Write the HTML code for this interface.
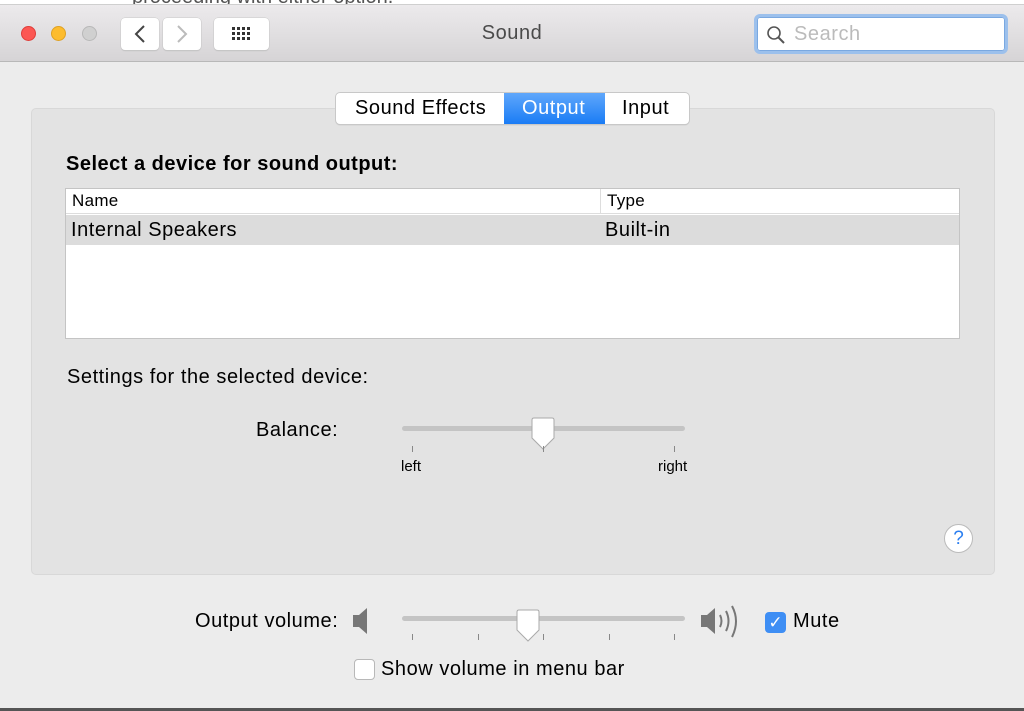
<!DOCTYPE html>
<html><head><style>
*{margin:0;padding:0;box-sizing:border-box}
body{width:1024px;height:711px;overflow:hidden;background:#fff;font-family:"Liberation Sans",sans-serif;position:relative;color:#000}
.abs{position:absolute}
#win{left:0;top:4px;width:1024px;height:705px;background:#ececec;border-top:1px solid #cfcfcf}
#title{left:0;top:0;width:1024px;height:57px;background:linear-gradient(#eceaec,#d6d4d6);border-bottom:1px solid #b8b8b8}
.dot{width:15px;height:15px;border-radius:50%;top:21px}
.btn{background:#fff;border-radius:4px;box-shadow:0 0 0 .5px #c8c8c8,0 1px 1px #bbb;height:32px;top:13px}
.lbl{font-size:20px;letter-spacing:.55px;white-space:nowrap}
</style></head><body>
<div class="abs" style="left:132px;top:-14px;font-size:20px;color:#555">proceeding with either option.</div>
<div id="win" class="abs">
 <div id="title" class="abs">
  <div class="abs dot" style="left:21px;background:#fc5753;border:1px solid #df3d39"></div>
  <div class="abs dot" style="left:51px;background:#fdbc2e;border:1px solid #dfa123"></div>
  <div class="abs dot" style="left:82px;background:#d0d0d0;border:1px solid #b8b8b8"></div>
  <div class="abs btn" style="left:121px;width:38px"><svg width="38" height="32"><path d="M23 8 L15 16 L23 24" fill="none" stroke="#444" stroke-width="2"/></svg></div>
  <div class="abs btn" style="left:163px;width:38px"><svg width="38" height="32"><path d="M15 8 L23 16 L15 24" fill="none" stroke="#bbb" stroke-width="2"/></svg></div>
  <div class="abs btn" style="left:214px;width:55px"><svg width="55" height="32"><g fill="#333"><rect x="18" y="9" width="3" height="3"/><rect x="23" y="9" width="3" height="3"/><rect x="28" y="9" width="3" height="3"/><rect x="33" y="9" width="3" height="3"/><rect x="18" y="14" width="3" height="3"/><rect x="23" y="14" width="3" height="3"/><rect x="28" y="14" width="3" height="3"/><rect x="33" y="14" width="3" height="3"/><rect x="18" y="19" width="3" height="3"/><rect x="23" y="19" width="3" height="3"/><rect x="28" y="19" width="3" height="3"/><rect x="33" y="19" width="3" height="3"/></g></svg></div>
  <div class="abs lbl" style="left:0;width:1024px;text-align:center;top:17px;color:#4a4a4a">Sound</div>
  <div class="abs" style="left:754px;top:9px;width:254px;height:40px;border-radius:6px;background:#fff;border:3px solid #9cc0ec;box-shadow:inset 0 0 0 1px #7aa8e0"></div>
  <svg class="abs" style="left:766px;top:20px" width="22" height="22"><circle cx="8" cy="8" r="6" fill="none" stroke="#555" stroke-width="1.6"/><path d="M12.5 12.5 L18 18" stroke="#555" stroke-width="2"/></svg>
  <div class="abs lbl" style="left:794px;top:18px;color:#bbb">Search</div>
 </div>
 <div class="abs" style="left:31px;top:103px;width:964px;height:467px;background:#e3e3e3;border:1px solid #d8d8d8;border-radius:5px"></div>
 <div class="abs" style="left:336px;top:88px;width:353px;height:31px;background:#fff;border-radius:4px;box-shadow:0 0 0 1px #c8c8c8,0 1px 1px #aaa;overflow:hidden">
  <div class="abs" style="left:168px;top:0;width:101px;height:31px;background:linear-gradient(#5fa7fb,#1a7cf5)"></div>
  <div class="abs lbl" style="left:19px;top:4px">Sound Effects</div>
  <div class="abs lbl" style="left:186px;top:4px;color:#fff">Output</div>
  <div class="abs lbl" style="left:286px;top:4px">Input</div>
 </div>
 <div class="abs lbl" style="left:66px;top:148px;font-weight:bold;letter-spacing:.5px">Select a device for sound output:</div>
 <div class="abs" style="left:65px;top:183px;width:895px;height:151px;background:#fff;border:1px solid #c4c4c4">
  <div class="abs" style="left:0;top:0;width:893px;height:25px;border-bottom:1px solid #ddd;font-size:17px;letter-spacing:.3px"><span class="abs" style="left:6px;top:2px">Name</span><span class="abs" style="left:534px;top:0;height:24px;border-left:1px solid #ddd"></span><span class="abs" style="left:541px;top:2px">Type</span></div>
  <div class="abs lbl" style="left:0;top:26px;width:893px;height:30px;background:#dcdcdc"><span class="abs" style="left:5px;top:4px">Internal Speakers</span><span class="abs" style="left:539px;top:4px">Built-in</span></div>
 </div>
 <div class="abs lbl" style="left:67px;top:361px">Settings for the selected device:</div>
 <div class="abs lbl" style="left:256px;top:414px">Balance:</div>
 <div class="abs" style="left:402px;top:421px;width:283px;height:5px;border-radius:3px;background:#c4c4c4"></div>
 <svg class="abs" style="left:529px;top:412px" width="28" height="34"><path d="M3 3 Q3 1 5 1 H23 Q25 1 25 3 V21 L14 32 L3 21 Z" fill="#fff" stroke="#aaa"/></svg>
 <div class="abs" style="left:412px;top:441px;width:1px;height:6px;background:#888"></div>
 <div class="abs" style="left:543px;top:441px;width:1px;height:6px;background:#888"></div>
 <div class="abs" style="left:674px;top:441px;width:1px;height:6px;background:#888"></div>
 <div class="abs" style="left:401px;top:453px;font-size:15px">left</div>
 <div class="abs" style="left:658px;top:453px;font-size:15px">right</div>
 <div class="abs" style="left:944px;top:519px;width:29px;height:29px;border-radius:50%;background:#fff;border:1px solid #bbb;color:#2a7ef0;text-align:center;font-size:19px;line-height:27px">?</div>
 <div class="abs lbl" style="left:195px;top:605px">Output volume:</div>
 <svg class="abs" style="left:352px;top:601px" width="22" height="30"><path d="M1 9 H7 L15 2 V28 L7 21 H1 Z" fill="#777"/></svg>
 <div class="abs" style="left:402px;top:611px;width:283px;height:5px;border-radius:3px;background:#c4c4c4"></div>
 <svg class="abs" style="left:514px;top:604px" width="28" height="34"><path d="M3 3 Q3 1 5 1 H23 Q25 1 25 3 V21 L14 32 L3 21 Z" fill="#fff" stroke="#aaa"/></svg>
 <div class="abs" style="left:412px;top:629px;width:1px;height:6px;background:#888"></div>
 <div class="abs" style="left:478px;top:629px;width:1px;height:6px;background:#888"></div>
 <div class="abs" style="left:543px;top:629px;width:1px;height:6px;background:#888"></div>
 <div class="abs" style="left:609px;top:629px;width:1px;height:6px;background:#888"></div>
 <div class="abs" style="left:674px;top:629px;width:1px;height:6px;background:#888"></div>
 <svg class="abs" style="left:700px;top:597px" width="50" height="40"><path d="M1 13 H7 L15 6 V32 L7 25 H1 Z" fill="#777"/><path d="M20 13 Q23 19 20 25" fill="none" stroke="#777" stroke-width="2"/><path d="M26 9 Q31 19 26 29" fill="none" stroke="#777" stroke-width="2"/><path d="M32 4 Q40 19 32 35" fill="none" stroke="#777" stroke-width="2"/></svg>
 <div class="abs" style="left:765px;top:607px;width:21px;height:21px;border-radius:4px;background:#3e8ef4;color:#fff;text-align:center;font-size:17px;line-height:21px">✓</div>
 <div class="abs lbl" style="left:793px;top:605px">Mute</div>
 <div class="abs" style="left:354px;top:654px;width:21px;height:21px;border-radius:4px;background:#fff;border:1px solid #b8b8b8"></div>
 <div class="abs lbl" style="left:381px;top:653px">Show volume in menu bar</div>
</div>
<div class="abs" style="left:0;top:708px;width:1024px;height:3px;background:#555"></div>
</body></html>
